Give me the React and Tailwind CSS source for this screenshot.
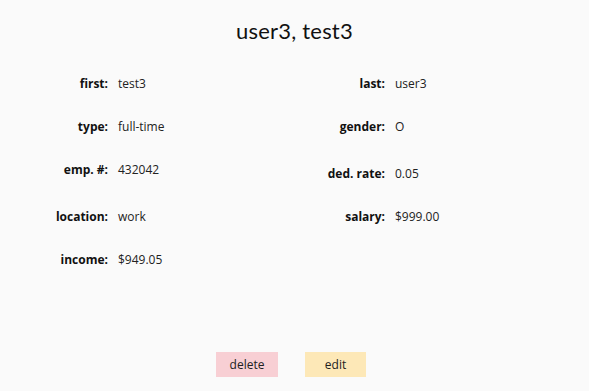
import React from 'react';

const rows = [
  [['first:', 'test3'], ['last:', 'user3'], 'h-[43px]', '', ''],
  [['type:', 'full-time'], ['gender:', 'O'], 'h-[43px]', '', ''],
  [['emp. #:', '432042'], ['ded. rate:', '0.05'], 'h-[47px]', 'pb-[4px]', 'pt-[4px]'],
  [['location:', 'work'], ['salary:', '$999.00'], 'h-[43px]', '', ''],
  [['income:', '$949.05'], null, 'h-[43px]', '', ''],
];

function Field({label, value, extra}) {
  return (
    <div className={'flex items-center ' + extra}>
      <span className="w-[88px] text-right font-bold text-[#111]">{label}</span>
      <span className="ml-[10px] text-[#222]">{value}</span>
    </div>
  );
}

export default function App() {
  return (
    <div
      className="w-[589px] h-[391px] bg-[#fafafa] text-[12px]"
      style={{fontFamily: '"Open Sans", sans-serif'}}
    >
      <h1
        className="pt-[16px] text-center text-[22px] leading-[30px] text-[#111] tracking-[0.2px]"
        style={{fontFamily: 'Lato, sans-serif'}}
      >
        user3, test3
      </h1>
      <div className="mt-[16px] pl-[20px]">
        {rows.map(([l, r, h, padL, padR], i) => (
          <div key={i} className={'grid grid-cols-[277px_277px] ' + h}>
            <Field label={l[0]} value={l[1]} extra={padL} />
            {r ? <Field label={r[0]} value={r[1]} extra={padR} /> : <div />}
          </div>
        ))}
      </div>
      <div className="mt-[71px] flex justify-center gap-[27px] pr-[7px]">
        <button className="w-[62px] h-[25px] bg-[#f8cfd4] text-[#222]">delete</button>
        <button className="w-[61px] h-[25px] bg-[#fde8b7] text-[#222]">edit</button>
      </div>
    </div>
  );
}
